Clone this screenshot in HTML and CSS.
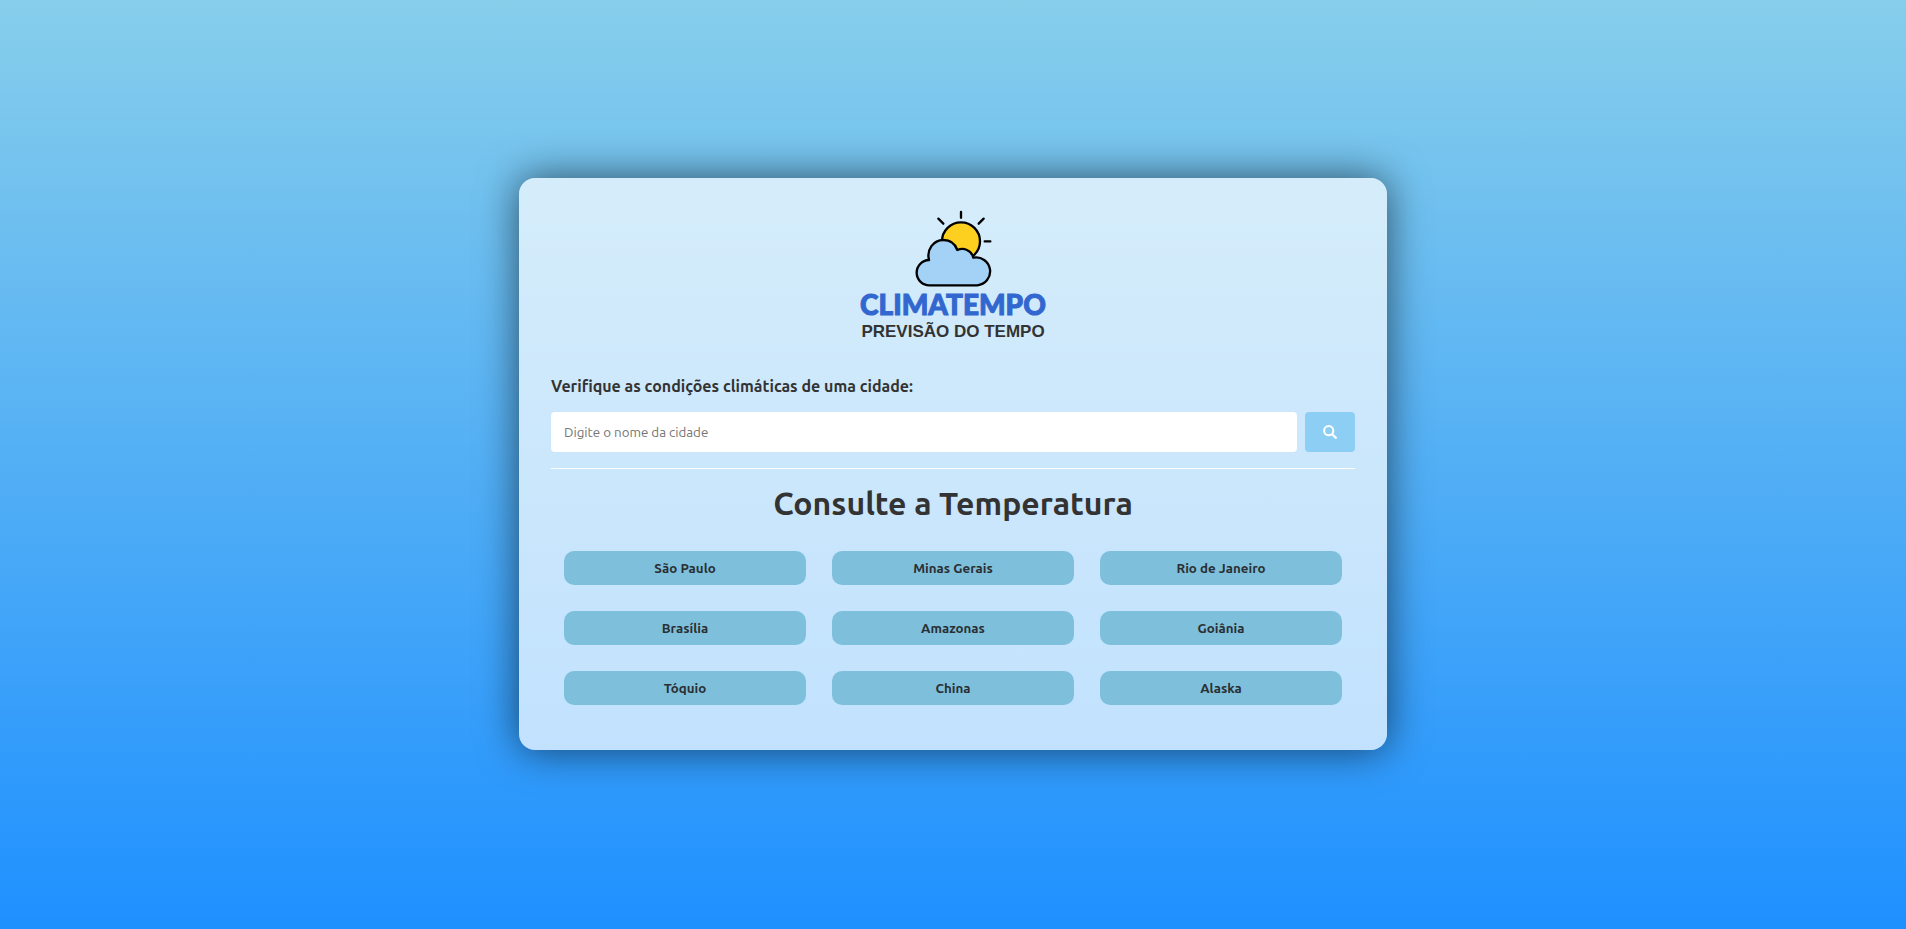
FILE: index.html
```html
<!DOCTYPE html>
<html lang="pt-BR">
<head>
  <meta charset="UTF-8">
  <meta name="viewport" content="width=device-width, initial-scale=1.0">
  <title>Climatempo</title>
  <link rel="stylesheet" href="styles.css">
</head>
<body>
  <main class="card">
    <header class="logo">
      <svg class="logo-icon" viewBox="222 45 234 234" aria-hidden="true">
        <circle cx="363" cy="139" r="57" fill="#fdd020" stroke="#000" stroke-width="7"/>
        <path d="M363 51v17M295 71l15 15M431 71l-15 15M434 139h17" fill="none" stroke="#000" stroke-width="7" stroke-linecap="round"/>
        <path d="M269 271H412A42 42 0 1 0 400 188C394 165 371 157 352 165C345 145 329 135 310 135C280 135 259 164 267 195A38 38 0 0 0 269 271Z" fill="#a4d2f7" stroke="#000" stroke-width="7" stroke-linejoin="round"/>
      </svg>
      <span class="logo-name">CLIMATEMPO</span>
      <span class="logo-tagline">PREVISÃO DO TEMPO</span>
    </header>

    <form class="search">
      <label class="search-label" for="city">Verifique as condições climáticas de uma cidade:</label>
      <div class="search-row">
        <input class="search-input" type="text" id="city" placeholder="Digite o nome da cidade">
        <button class="search-button" type="button" aria-label="Buscar">
          <svg class="search-icon" viewBox="0 0 14 14" aria-hidden="true">
            <circle cx="5.7" cy="5.7" r="4.6" fill="none" stroke="#fff" stroke-width="2"/>
            <path d="M9.2 9.2l3.6 3.6" stroke="#fff" stroke-width="2.3" stroke-linecap="round"/>
          </svg>
        </button>
      </div>
    </form>

    <section class="cities">
      <h1 class="cities-title">Consulte a Temperatura</h1>
      <div class="cities-grid">
        <button class="city" type="button">São Paulo</button>
        <button class="city" type="button">Minas Gerais</button>
        <button class="city" type="button">Rio de Janeiro</button>
        <button class="city" type="button">Brasília</button>
        <button class="city" type="button">Amazonas</button>
        <button class="city" type="button">Goiânia</button>
        <button class="city" type="button">Tóquio</button>
        <button class="city" type="button">China</button>
        <button class="city" type="button">Alaska</button>
      </div>
    </section>
  </main>
</body>
</html>
```
FILE: styles.css
```css
* {
  margin: 0;
  padding: 0;
  box-sizing: border-box;
  font-family: Ubuntu, "Noto Sans", sans-serif;
}

body {
  min-height: 100vh;
  padding-bottom: 1px;
  display: flex;
  align-items: center;
  justify-content: center;
  color: #333;
  background: linear-gradient(skyblue, dodgerblue);
}

.card {
  width: 100%;
  max-width: 868px;
  padding: 32px;
  border-radius: 16px;
  background: rgba(255, 255, 255, 0.7);
  box-shadow: 0 0 40px rgba(0, 0, 0, 0.6);
}

.logo {
  display: flex;
  flex-direction: column;
  align-items: center;
  padding-bottom: 30px;
}

.logo-icon {
  width: 78px;
  height: 78px;
}

.logo-name {
  font: 900 28px/32px Lato, sans-serif;
  color: #3267d0;
  -webkit-text-stroke: 1px #3267d0;
}

.logo-tagline {
  font: bold 17px/24px "Liberation Sans", Arial, sans-serif;
}

.search {
  padding-bottom: 16px;
  border-bottom: 1px solid #fff;
}

.search-label {
  display: block;
  margin-bottom: 14px;
  font-size: 16px;
  font-weight: 700;
  line-height: 24px;
}

.search-row {
  display: flex;
  gap: 8px;
}

.search-input {
  flex: 1;
  min-width: 0;
  height: 40px;
  padding: 0 13px;
  border: 0;
  border-radius: 4px;
  background: #fff;
}

.search-input::placeholder {
  color: #757575;
}

.search-button {
  display: flex;
  align-items: center;
  justify-content: center;
  width: 50px;
  height: 40px;
  border: 0;
  border-radius: 4px;
  background: #8dcff4;
  cursor: pointer;
}

.search-icon {
  width: 14px;
  height: 14px;
}

.cities-title {
  padding: 16px 0;
  font-size: 32px;
  line-height: 37px;
  text-align: center;
}

.cities-grid {
  display: grid;
  grid-template-columns: repeat(3, 1fr);
  gap: 26px;
  padding: 13px;
}

.city {
  height: 34px;
  border: 0;
  border-radius: 10px;
  background: #7ebfdc;
  color: #2a2f33;
  font-weight: 700;
  cursor: pointer;
}
```
